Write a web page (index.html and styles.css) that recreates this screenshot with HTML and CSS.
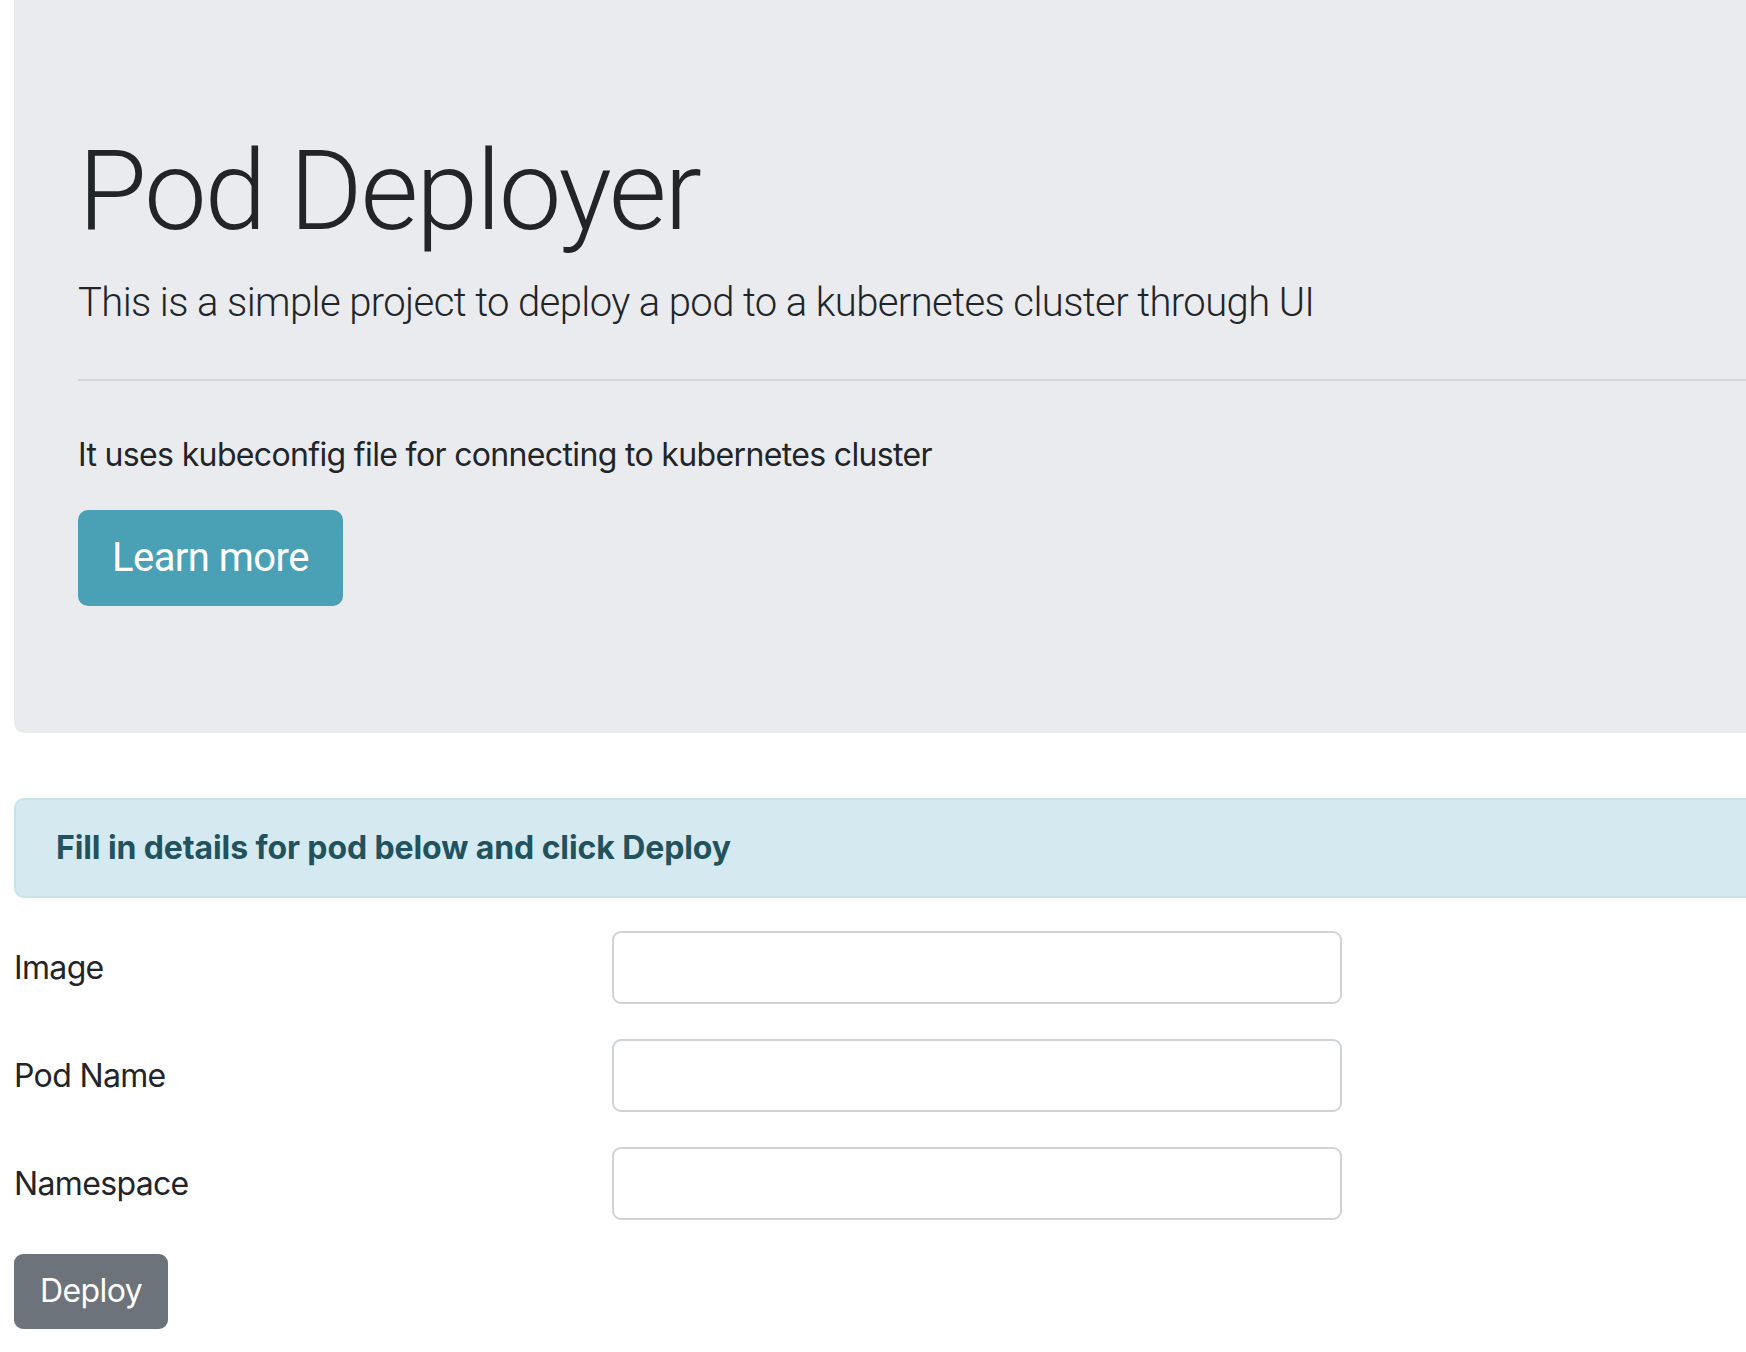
FILE: index.html
```html
<!DOCTYPE html>
<html lang="en">
<head>
<meta charset="utf-8">
<title>Pod Deployer</title>
<link rel="stylesheet" href="styles.css">
</head>
<body>
<div class="page">
  <div class="jumbotron">
    <h1 class="display">Pod Deployer</h1>
    <p class="lead">This is a simple project to deploy a pod to a kubernetes cluster through UI</p>
    <hr class="divider">
    <p class="note">It uses kubeconfig file for connecting to kubernetes cluster</p>
    <a class="btn btn-info" href="#">Learn more</a>
  </div>
  <div class="alert">Fill in details for pod below and click Deploy</div>
  <form class="pod-form">
    <div class="fields">
      <label class="field-label" for="image">Image</label>
      <input class="field-input" id="image" type="text">
      <label class="field-label" for="podname">Pod Name</label>
      <input class="field-input" id="podname" type="text">
      <label class="field-label" for="namespace">Namespace</label>
      <input class="field-input" id="namespace" type="text">
    </div>
    <button class="btn-deploy" type="button">Deploy</button>
  </form>
</div>
</body>
</html>
```

FILE: styles.css
```css
html, body {
  margin: 0;
  padding: 0;
  overflow-x: hidden;
  background: #ffffff;
}
body {
  font-family: Inter, "Noto Sans", "Liberation Sans", sans-serif;
  color: #212529;
  font-size: 32px;
  line-height: 1.5;
  letter-spacing: -0.65px;
}
.page {
  padding-left: 14px;
  margin-right: -40px;
}
.jumbotron {
  background: #eaebef;
  padding: 124px 20px 127px 64px;
  border-radius: 0 0 0 10px;
}
.display {
  margin: 0 0 15px 0;
  font-family: Roboto, Inter, sans-serif;
  font-size: 112px;
  font-weight: 300;
  line-height: 1.2;
  letter-spacing: -2.3px;
}
.lead {
  margin: 0;
  font-family: Roboto, Inter, sans-serif;
  font-size: 40px;
  font-weight: 300;
  line-height: 60px;
  letter-spacing: -0.6px;
}
.divider {
  margin: 46px 0 50px 0;
  border: 0;
  border-top: 2px solid #d3d5d9;
  height: 0;
}
.note {
  margin: 0 0 31px 0;
  font-size: 32px;
  line-height: 48px;
}
.btn {
  display: inline-block;
  text-decoration: none;
  font-family: Roboto, Inter, sans-serif;
  font-size: 40px;
  line-height: 60px;
  letter-spacing: -0.55px;
  padding: 16px 32px;
  border: 2px solid transparent;
  border-radius: 10px;
}
.btn-info {
  background: #4aa0b5;
  border-color: #4aa0b5;
  color: #ffffff;
}
.alert {
  margin-top: 65px;
  background: #d5eaf0;
  border: 2px solid #c5e3ea;
  border-right: 0;
  border-radius: 10px 0 0 10px;
  padding: 24px 40px;
  color: #22525e;
  font-weight: 700;
  font-size: 32px;
  line-height: 48px;
  letter-spacing: -0.1px;
}
.pod-form {
  margin: 33px 0 0 0;
}
.fields {
  display: grid;
  grid-template-columns: 598px 730px;
  grid-auto-rows: 73px;
  row-gap: 35px;
  align-items: center;
}
.field-label {
  font-size: 32px;
  line-height: 48px;
}
.field-input {
  box-sizing: border-box;
  height: 73px;
  width: 730px;
  border: 2px solid #cfd3d8;
  border-radius: 9px;
  background: #ffffff;
  padding: 0 20px;
  font-family: inherit;
  font-size: 32px;
  margin: 0;
}
.btn-deploy {
  margin-top: 34px;
  display: block;
  background: #6c737b;
  border: 2px solid #6c737b;
  color: #ffffff;
  font-family: inherit;
  font-size: 32px;
  line-height: 48px;
  letter-spacing: -0.6px;
  padding: 11px 24px 12px 24px;
  border-radius: 9px;
}
```
